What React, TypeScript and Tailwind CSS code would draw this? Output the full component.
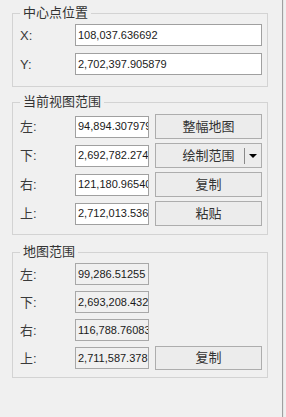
import React from "react";

const FONT = { fontFamily: '"Liberation Sans", "Noto Sans CJK SC", sans-serif' };

function Box({ value, w, ro }: { value: string; w: string; ro?: boolean }) {
  return (
    <div
      className={`${w} h-[22px] shrink-0 border flex items-center pl-[2px] overflow-hidden whitespace-nowrap text-[11px] text-[#1a1a1a] ${
        ro ? "bg-[#f0f0f0] border-[#a8a8a8]" : "bg-white border-[#a0a0a0]"
      }`}
    >
      {value}
    </div>
  );
}

function Btn({ label, dropdown }: { label: string; dropdown?: boolean }) {
  return (
    <div className="relative ml-[6px] w-[107px] h-[25px] shrink-0 border border-[#adadad] bg-[#ececec] flex items-center justify-center text-[13px] text-[#333]">
      <span>{label}</span>
      {dropdown && (
        <div className="absolute right-[4px] top-[3px] h-[17px] flex items-center">
          <div className="w-px h-[16px] bg-[#8a8a8a]" />
          <svg width="8" height="4" viewBox="0 0 8 4" className="ml-[4px]">
            <polygon points="0,0 8,0 4,4" fill="#000" />
          </svg>
        </div>
      )}
    </div>
  );
}

function Label({ text }: { text: string }) {
  return <span className="w-[55px] shrink-0 text-[13px] text-[#3a3a3a] leading-none">{text}</span>;
}

function Group({
  title,
  className,
  children,
}: {
  title: string;
  className: string;
  children: React.ReactNode;
}) {
  return (
    <fieldset className={`ml-[12px] w-[256px] border border-[#d3d3d3] pl-[7px] ${className}`}>
      <legend className="px-[3px] text-[13px] leading-[16px] text-[#333]">{title}</legend>
      {children}
    </fieldset>
  );
}

export default function App() {
  return (
    <div className="w-[286px] h-[417px] bg-[#f0f0f0] flex overflow-hidden" style={FONT}>
      <div className="w-[282px] shrink-0 flex flex-col">
        <Group title="中心点位置" className="mt-[5px] pt-[3px] pb-[11px]">
          <div className="flex flex-col gap-[7px]">
            <div className="flex items-center h-[22px]">
              <Label text="X:" />
              <Box value="108,037.636692" w="w-[187px]" />
            </div>
            <div className="flex items-center h-[22px]">
              <Label text="Y:" />
              <Box value="2,702,397.905879" w="w-[187px]" />
            </div>
          </div>
        </Group>

        <Group title="当前视图范围" className="mt-[7px] pt-[4px] pb-[8px]">
          <div className="flex flex-col gap-[4px]">
            {[
              ["左:", "94,894.307979!", "整幅地图"],
              ["下:", "2,692,782.274", "绘制范围"],
              ["右:", "121,180.965404", "复制"],
              ["上:", "2,712,013.536", "粘贴"],
            ].map(([l, v, b], i) => (
              <div key={l} className="flex items-center h-[25px]">
                <Label text={l} />
                <Box value={v} w="w-[74px]" />
                <Btn label={b} dropdown={i === 1} />
              </div>
            ))}
          </div>
        </Group>

        <Group title="地图范围" className="mt-[9px] pt-[3px] pb-[8px]">
          <div className="flex flex-col gap-[6px]">
            {[
              ["左:", "99,286.51255"],
              ["下:", "2,693,208.432"],
              ["右:", "116,788.76083"],
              ["上:", "2,711,587.378"],
            ].map(([l, v], i) => (
              <div key={l} className="flex items-center h-[22px]">
                <Label text={l} />
                <Box value={v} w="w-[74px]" ro />
                {i === 3 && (
                  <div className="ml-[6px] w-[107px] h-[24px] shrink-0 border border-[#adadad] bg-[#ececec] flex items-center justify-center text-[13px] text-[#333]">
                    复制
                  </div>
                )}
              </div>
            ))}
          </div>
        </Group>
      </div>
      <div className="w-px h-full bg-[#a0a0a0]" />
      <div className="w-px h-full bg-[#e6e6e6]" />
    </div>
  );
}
